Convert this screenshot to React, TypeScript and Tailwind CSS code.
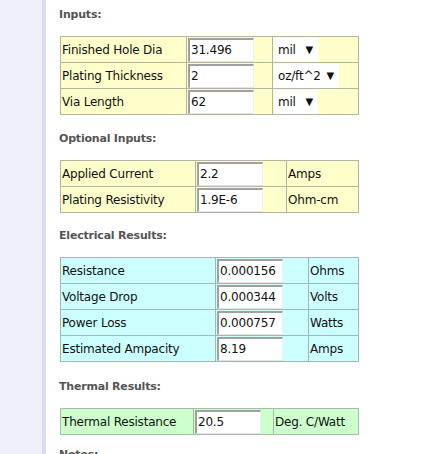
import React from 'react';

type Row = { label: string; value: string; unit: string; selectW?: string };

type Section = {
  title: string;
  cols: string;
  bg: string;
  border: string;
  rows: Row[];
  mt: string;
};

const sections: Section[] = [
  {
    title: 'Inputs:',
    cols: 'grid-cols-[125px_85px_85px]',
    bg: 'bg-[#ffffcc]',
    border: 'bg-[#b4b4a2]',
    mt: 'mt-0',
    rows: [
      { label: 'Finished Hole Dia', value: '31.496', unit: 'mil', selectW: 'w-[44px]' },
      { label: 'Plating Thickness', value: '2', unit: 'oz/ft^2', selectW: 'w-[65px]' },
      { label: 'Via Length', value: '62', unit: 'mil', selectW: 'w-[44px]' },
    ],
  },
  {
    title: 'Optional Inputs:',
    cols: 'grid-cols-[134px_90px_71px]',
    bg: 'bg-[#ffffcc]',
    border: 'bg-[#b4b4a2]',
    mt: 'mt-[17px]',
    rows: [
      { label: 'Applied Current', value: '2.2', unit: 'Amps' },
      { label: 'Plating Resistivity', value: '1.9E-6', unit: 'Ohm-cm' },
    ],
  },
  {
    title: 'Electrical Results:',
    cols: 'grid-cols-[154px_92px_49px]',
    bg: 'bg-[#ccffff]',
    border: 'bg-[#a2b6b6]',
    mt: 'mt-[16px]',
    rows: [
      { label: 'Resistance', value: '0.000156', unit: 'Ohms' },
      { label: 'Voltage Drop', value: '0.000344', unit: 'Volts' },
      { label: 'Power Loss', value: '0.000757', unit: 'Watts' },
      { label: 'Estimated Ampacity', value: '8.19', unit: 'Amps' },
    ],
  },
  {
    title: 'Thermal Results:',
    cols: 'grid-cols-[132px_79px_84px]',
    bg: 'bg-[#ccffcc]',
    border: 'bg-[#a8baa8]',
    mt: 'mt-[18px]',
    rows: [{ label: 'Thermal Resistance', value: '20.5', unit: 'Deg. C/Watt' }],
  },
];

const Heading: React.FC<{ children: React.ReactNode; className?: string }> = ({ children, className }) => (
  <h3 className={`h-[13px] text-[11px] font-bold leading-[13px] tracking-[-0.2px] text-[#555555] ${className ?? ''}`}>
    {children}
  </h3>
);

const UnitSelect: React.FC<{ value: string; w: string }> = ({ value, w }) => (
  <div className={`flex h-[24px] ${w} items-center justify-between bg-white pl-[4px] pr-[5px]`}>
    <span>{value}</span>
    <span className="text-[10px] leading-none">▼</span>
  </div>
);

const App: React.FC = () => {
  return (
    <div className="flex min-h-[454px] font-['DejaVu_Sans',sans-serif] text-[12px] tracking-[-0.2px] text-[#111111]">
      {/* left nav strip */}
      <div className="w-[42px] shrink-0 bg-[#efeffa]" />
      <div className="w-[4px] shrink-0 bg-[#dcdcee]" />

      <main className="flex-1 bg-white pl-[13px] pt-[8px]">
        {sections.map((s) => (
          <section key={s.title} className={s.mt}>
            <Heading>{s.title}</Heading>

            <div className={`ml-px mt-[15px] grid w-[299px] ${s.cols} gap-px p-px ${s.border}`}>
              {s.rows.map((r) => (
                <React.Fragment key={r.label}>
                  <div className={`flex h-[25px] items-center pl-px ${s.bg}`}>{r.label}</div>
                  <div className={`flex h-[25px] items-center pl-px ${s.bg}`}>
                    <input
                      readOnly
                      value={r.value}
                      className="h-[24px] w-[66px] border-b border-l-2 border-r border-t-2 border-b-[#e4e4e4] border-l-[#a0a0a0] border-r-[#f0f0f0] border-t-[#a0a0a0] bg-white pl-px text-[12px] tracking-[-0.2px] outline-none"
                    />
                  </div>
                  <div className={`flex h-[25px] items-center pl-px ${s.bg}`}>
                    {r.selectW ? <UnitSelect value={r.unit} w={r.selectW} /> : r.unit}
                  </div>
                </React.Fragment>
              ))}
            </div>
          </section>
        ))}

        <Heading className="mt-[13px]">Notes:</Heading>
      </main>
    </div>
  );
};

export default App;
